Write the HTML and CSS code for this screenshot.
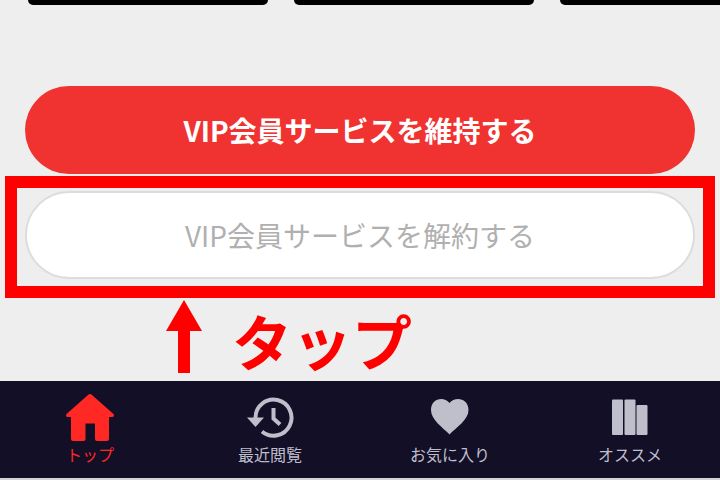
FILE: index.html
```html
<!DOCTYPE html>
<html lang="ja">
<head>
    <meta charset="UTF-8">
    <meta name="viewport" content="width=device-width, initial-scale=1.0">
    <title>VIP会員サービス</title>
    <link rel="stylesheet" href="styles.css">
</head>
<body>

<main>
    <div class="cards">
        <div class="card"></div>
        <div class="card"></div>
        <div class="card"></div>
    </div>

    <div class="actions">
        <button type="button" class="btn btn-keep">VIP会員サービスを維持する</button>
        <div class="target">
            <button type="button" class="btn btn-cancel">VIP会員サービスを解約する</button>
            <div class="highlight"></div>
        </div>
    </div>

    <div class="hint">
        <svg class="arrow" width="36" height="74" viewBox="0 0 36 74" aria-hidden="true">
            <path d="M18 0 L36 31 H24 V73 H12 V31 H0 Z"/>
        </svg>
        <p class="hint-text">タップ</p>
    </div>
</main>

<nav class="tabs">
    <a href="#" class="tab active">
        <svg class="icon" width="50" height="50" viewBox="0 0 50 50" aria-hidden="true">
            <path d="M25 1 Q26 1 27 2 L48.500 21 Q50 24 47 24 H44 V46 Q44 48 42 48 H32 Q30 48 30 46 V30.500 H20.500 V46 Q20.500 48 18.500 48 H8 Q6 48 6 46 V24 H3 Q0 24 1.500 21 L23 2 Q24 1 25 1 Z"/>
        </svg>
        <span>トップ</span>
    </a>
    <a href="#" class="tab">
        <svg class="icon" width="50" height="50" viewBox="0 0 50 50" aria-hidden="true">
            <path class="line" d="M10.500 25 A18 18 0 1 1 17 38.500"/>
            <path class="line" d="M28.500 15 V25.500 L35 31.500"/>
            <path d="M2 24.500 H19 L10.500 34 Z"/>
        </svg>
        <span>最近閲覧</span>
    </a>
    <a href="#" class="tab">
        <svg class="icon" width="50" height="50" viewBox="0 0 50 50" aria-hidden="true">
            <path d="M24.500 41.500 C18 34.500 6 27 6 17 C6 5 19 3 24.500 10 C30 3 43.500 5 43.500 17 C43.500 27 31 34.500 24.500 41.500 Z"/>
        </svg>
        <span>お気に入り</span>
    </a>
    <a href="#" class="tab">
        <svg class="icon" width="50" height="50" viewBox="0 0 50 50" aria-hidden="true">
            <rect x="7" y="6.500" width="11" height="35.500" rx="1"/>
            <rect x="19.500" y="6.500" width="11" height="35.500" rx="1"/>
            <rect x="31.500" y="12" width="11" height="30" rx="1"/>
        </svg>
        <span>オススメ</span>
    </a>
</nav>

</body>
</html>
```

FILE: styles.css
```css
* {
    box-sizing: border-box;
}
body {
    font-family: "Noto Sans CJK JP", sans-serif;
    margin: 0;
    background-color: #eeeeee;
    display: flex;
    flex-direction: column;
    min-height: 100vh;
}
main {
    flex: 1;
}
.cards {
    display: flex;
    gap: 26px;
    padding-left: 28px;
    overflow: hidden;
}
.card {
    flex: 0 0 240px;
    height: 5px;
    background-color: #000;
    border-radius: 0 0 5px 5px;
}
.actions {
    display: flex;
    flex-direction: column;
    gap: 17px;
    padding: 81px 25px 0;
}
.btn {
    display: block;
    width: 100%;
    height: 88px;
    padding: 0 20px;
    border: none;
    border-radius: 44px;
    font-family: inherit;
    font-size: 28px;
    cursor: pointer;
}
.btn-keep {
    background-color: #f03230;
    color: #fff;
    font-weight: bold;
}
.btn-cancel {
    background-color: #fff;
    color: #b0b0b0;
    border: 2px solid #dcdcdc;
}
.target {
    position: relative;
}
.highlight {
    position: absolute;
    inset: -15px -20px -19px;
    border: 12px solid #f00;
    pointer-events: none;
}
.hint {
    display: flex;
    gap: 30px;
    padding: 21px 0 0 166px;
}
.arrow {
    fill: #f00;
}
.hint-text {
    margin: 0;
    color: #f00;
    font-size: 60px;
    font-weight: bold;
    line-height: 80px;
}
.tabs {
    display: grid;
    grid-template-columns: repeat(4, 1fr);
    background-color: #120f26;
    border-bottom: 2px solid #d4d3d8;
}
.tab {
    display: flex;
    flex-direction: column;
    align-items: center;
    padding: 12px 0;
    color: #bfbecb;
    font-size: 16px;
    line-height: 23px;
    text-decoration: none;
}
.tab.active {
    color: #ff2824;
}
.icon {
    fill: currentColor;
}
.icon .line {
    fill: none;
    stroke: currentColor;
    stroke-width: 4;
}
```
